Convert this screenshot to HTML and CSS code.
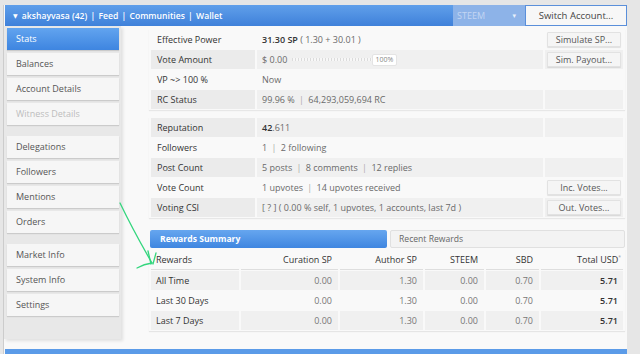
FILE: index.html
```html
<!DOCTYPE html>
<html lang="en">
  <head>
    <meta charset="UTF-8" />
    <meta name="viewport" content="width=device-width, initial-scale=1.0" />
    <title>SteemWorld - akshayvasa</title>
    <link rel="stylesheet" href="styles.css">
  </head>
  <body>
    <div class="page">
      <div class="topbar">
        <div class="crumbs">
          <span class="caret">▼</span> akshayvasa (42)
          <span class="sep">|</span> Feed
          <span class="sep">|</span> Communities
          <span class="sep">|</span> Wallet
        </div>
        <div class="coin">STEEM <span class="coin-caret">▾</span></div>
        <button class="switch">Switch Account...</button>
      </div>

      <div class="content">
        <div class="side">
          <div class="menu-group">
            <div class="menu-item active">Stats</div>
            <div class="menu-item">Balances</div>
            <div class="menu-item">Account Details</div>
            <div class="menu-item disabled">Witness Details</div>
          </div>
          <div class="menu-group">
            <div class="menu-item">Delegations</div>
            <div class="menu-item">Followers</div>
            <div class="menu-item">Mentions</div>
            <div class="menu-item">Orders</div>
          </div>
          <div class="menu-group">
            <div class="menu-item">Market Info</div>
            <div class="menu-item">System Info</div>
            <div class="menu-item">Settings</div>
          </div>
        </div>

        <div class="main">
          <table class="info">
            <tr>
              <td class="label">Effective Power</td>
              <td class="value"><b>31.30 SP</b> ( 1.30 + 30.01 )</td>
              <td class="act"><button class="small-btn">Simulate SP...</button></td>
            </tr>
            <tr class="alt">
              <td class="label">Vote Amount</td>
              <td class="value">
                <div class="vote">
                  <span class="vote-amt">$ 0.00</span>
                  <span class="track"></span>
                  <span class="pct">100%</span>
                </div>
              </td>
              <td class="act"><button class="small-btn">Sim. Payout...</button></td>
            </tr>
            <tr>
              <td class="label">VP ~&gt; 100 %</td>
              <td class="value">Now</td>
              <td class="act"></td>
            </tr>
            <tr class="alt">
              <td class="label">RC Status</td>
              <td class="value">99.96 % <span class="sep">|</span> 64,293,059,694 RC</td>
              <td class="act"></td>
            </tr>
          </table>

          <table class="info">
            <tr class="alt">
              <td class="label">Reputation</td>
              <td class="value"><b>42</b>.611</td>
              <td class="act"></td>
            </tr>
            <tr>
              <td class="label">Followers</td>
              <td class="value">1 <span class="sep">|</span> 2 following</td>
              <td class="act"></td>
            </tr>
            <tr class="alt">
              <td class="label">Post Count</td>
              <td class="value">5 posts <span class="sep">|</span> 8 comments <span class="sep">|</span> 12 replies</td>
              <td class="act"></td>
            </tr>
            <tr>
              <td class="label">Vote Count</td>
              <td class="value">1 upvotes <span class="sep">|</span> 14 upvotes received</td>
              <td class="act"><button class="small-btn">Inc. Votes...</button></td>
            </tr>
            <tr class="alt">
              <td class="label">Voting CSI</td>
              <td class="value">[ ? ] ( 0.00 % self, 1 upvotes, 1 accounts, last 7d )</td>
              <td class="act"><button class="small-btn">Out. Votes...</button></td>
            </tr>
          </table>

          <div class="tabs">
            <div class="tab on">Rewards Summary</div>
            <div class="tab off">Recent Rewards</div>
          </div>

          <table class="rewards">
            <thead>
              <tr>
                <th class="first">Rewards</th>
                <th>Curation SP</th>
                <th>Author SP</th>
                <th>STEEM</th>
                <th>SBD</th>
                <th class="total">Total USD<sup>*</sup></th>
              </tr>
            </thead>
            <tbody>
              <tr class="alt">
                <td class="first">All Time</td>
                <td>0.00</td><td>1.30</td><td>0.00</td><td>0.70</td>
                <td class="total">5.71</td>
              </tr>
              <tr>
                <td class="first">Last 30 Days</td>
                <td>0.00</td><td>1.30</td><td>0.00</td><td>0.70</td>
                <td class="total">5.71</td>
              </tr>
              <tr class="alt">
                <td class="first">Last 7 Days</td>
                <td>0.00</td><td>1.30</td><td>0.00</td><td>0.70</td>
                <td class="total">5.71</td>
              </tr>
            </tbody>
          </table>
        </div>
      </div>

      <div class="bottombar"></div>
    </div>

    <!-- hand drawn annotation on top of the screenshot -->
    <svg class="scribble" width="640" height="354" viewBox="0 0 640 354">
      <path d="M120 203 Q 134 232 152 263" />
      <path d="M148 251 L151 264 M156 253 L153 264" />
      <path d="M137 268 Q 144 264 152 263" />
    </svg>
  </body>
</html>
```

FILE: styles.css
```css
html,
body {
  margin: 0;
  overflow: hidden;
}
body {
  font-family: "Open Sans", "DejaVu Sans", sans-serif;
  font-size: 9px;
  color: #333;
  background: #e6e6e6;
}
.page {
  width: 623px;
  margin: 5px 0 0 3px;
  border-left: 1px solid #cdcdcd;
  background: #f9f9f9;
}

/* top bar */
.topbar {
  display: flex;
  align-items: center;
  height: 21px;
  margin-left: 1px;
  padding: 0 0 0 8px;
  background: linear-gradient(#609fea, #3f81da);
  color: white;
}
.crumbs {
  flex: 1;
  font-size: 8.6px;
  font-weight: 600;
  white-space: nowrap;
}
.crumbs .caret {
  font-size: 6px;
  margin-right: 2px;
  vertical-align: 1px;
}
.crumbs .sep {
  margin: 0 1px;
}
.coin {
  display: flex;
  align-items: center;
  justify-content: space-between;
  box-sizing: border-box;
  width: 72px;
  height: 21px;
  padding: 0 9px 0 4px;
  background: #8db3e8;
  color: #c3d6f3;
  font-size: 9px;
}
.coin-caret {
  font-size: 7px;
  color: #e8f0fb;
}
.switch {
  width: 102px;
  height: 21px;
  border: 1px solid #5a8fda;
  background: #f7f7f7;
  color: #444;
  font-family: "Open Sans", sans-serif;
  font-size: 9.5px;
  padding: 0;
}

/* left menu */
.content {
  display: flex;
  height: 323px;
}
.side {
  display: flex;
  flex-direction: column;
  gap: 11px;
  align-self: flex-start;
  box-sizing: border-box;
  width: 117px;
  padding: 2px 2px 23px 3px;
  background: #e8e8e8;
  box-shadow: 2px 2px 3px rgba(0, 0, 0, 0.1);
}
.menu-group {
  display: flex;
  flex-direction: column;
  gap: 3px;
}
.menu-item {
  height: 22px;
  line-height: 22px;
  padding-left: 9px;
  background: #f6f6f6;
  color: #555;
  box-shadow: 0 1px 1px rgba(0, 0, 0, 0.12);
}
.menu-item.active {
  background: linear-gradient(#62a4ef, #3e85e0);
  color: white;
}
.menu-item.disabled {
  color: #bdbdbd;
}

/* stats tables */
.main {
  flex: 1;
  padding: 3px 2px 0 28px;
}
.info {
  width: 476px;
  border-collapse: separate;
  border-spacing: 2px 1px;
  margin-bottom: 7px;
  box-shadow: 0 1px 1px rgba(0, 0, 0, 0.07);
}
.info td {
  height: 19px;
  padding: 0;
  white-space: nowrap;
}
.info .label {
  width: 98px;
  padding-left: 6px;
  color: #333;
}
.info .value {
  padding-left: 5px;
  color: #6a6a6a;
}
.info .value b {
  font-weight: 600;
  color: #333;
}
.info .act {
  width: 78px;
  text-align: center;
}
.info .sep {
  color: #aaa;
  margin: 0 2px;
}
.info .alt td {
  background: #f0f0f0;
}
.info .alt .label {
  background: #ebebeb;
}
.small-btn {
  width: 74px;
  height: 15px;
  padding: 0;
  border: 1px solid #e2e2e2;
  border-radius: 1px;
  background: #f5f5f5;
  color: #555;
  font-family: "Open Sans", sans-serif;
  font-size: 9px;
  box-shadow: 0 1px 1px rgba(0, 0, 0, 0.1);
  vertical-align: middle;
}
.vote {
  display: flex;
  align-items: center;
}
.vote-amt {
  width: 30px;
}
.track {
  width: 80px;
  height: 3px;
  background: repeating-linear-gradient(90deg, #dcdcdc 0 1px, #f7f7f7 1px 3px);
}
.pct {
  box-sizing: border-box;
  width: 25px;
  height: 12px;
  line-height: 10px;
  border: 1px solid #e4e4e4;
  border-radius: 2px;
  background: white;
  color: #888;
  font-size: 7px;
  text-align: center;
}

/* rewards */
.tabs {
  display: flex;
  gap: 3px;
  margin: 12px 0 1px 1px;
}
.tab {
  box-sizing: border-box;
  height: 18px;
  line-height: 18px;
}
.tab.on {
  width: 237px;
  padding-left: 10px;
  border-radius: 2px;
  background: linear-gradient(#66a6ef, #3f86e0);
  color: white;
  font-size: 8.6px;
  font-weight: 700;
}
.tab.off {
  flex: 1;
  line-height: 16px;
  padding-left: 8px;
  border: 1px solid #e0e0e0;
  border-radius: 2px;
  background: #f3f3f3;
  color: #666;
  font-size: 8.6px;
}
.rewards {
  width: 476px;
  table-layout: fixed;
  border-collapse: separate;
  border-spacing: 2px 1px;
  box-shadow: 0 1px 1px rgba(0, 0, 0, 0.08);
}
.rewards th,
.rewards td {
  height: 19px;
  padding: 0 6px 0 0;
  text-align: right;
  white-space: nowrap;
}
.rewards th {
  font-weight: normal;
  color: #333;
  border-bottom: 1px solid #dedede;
}
.rewards td {
  color: #777;
}
.rewards .first {
  width: 83px;
  padding: 0 0 0 5px;
  text-align: left;
  color: #333;
}
.rewards th:nth-child(2) { width: 91px; }
.rewards th:nth-child(3) { width: 77px; }
.rewards th:nth-child(4) { width: 53px; }
.rewards th:nth-child(5) { width: 47px; }
.rewards .total {
  padding-right: 5px;
  font-weight: 600;
  color: #333;
}
.rewards th.total {
  font-weight: normal;
  padding-right: 2px;
}
.rewards sup {
  font-size: 5px;
  color: #999;
  vertical-align: 4px;
}
.rewards .alt td {
  background: #f0f0f0;
}

.bottombar {
  height: 5px;
  margin-left: 1px;
  background: #5b9be8;
}

.scribble {
  position: absolute;
  left: 0;
  top: 0;
  pointer-events: none;
  fill: none;
  stroke: #34d67e;
  stroke-width: 1.3;
  stroke-linecap: round;
}
```
